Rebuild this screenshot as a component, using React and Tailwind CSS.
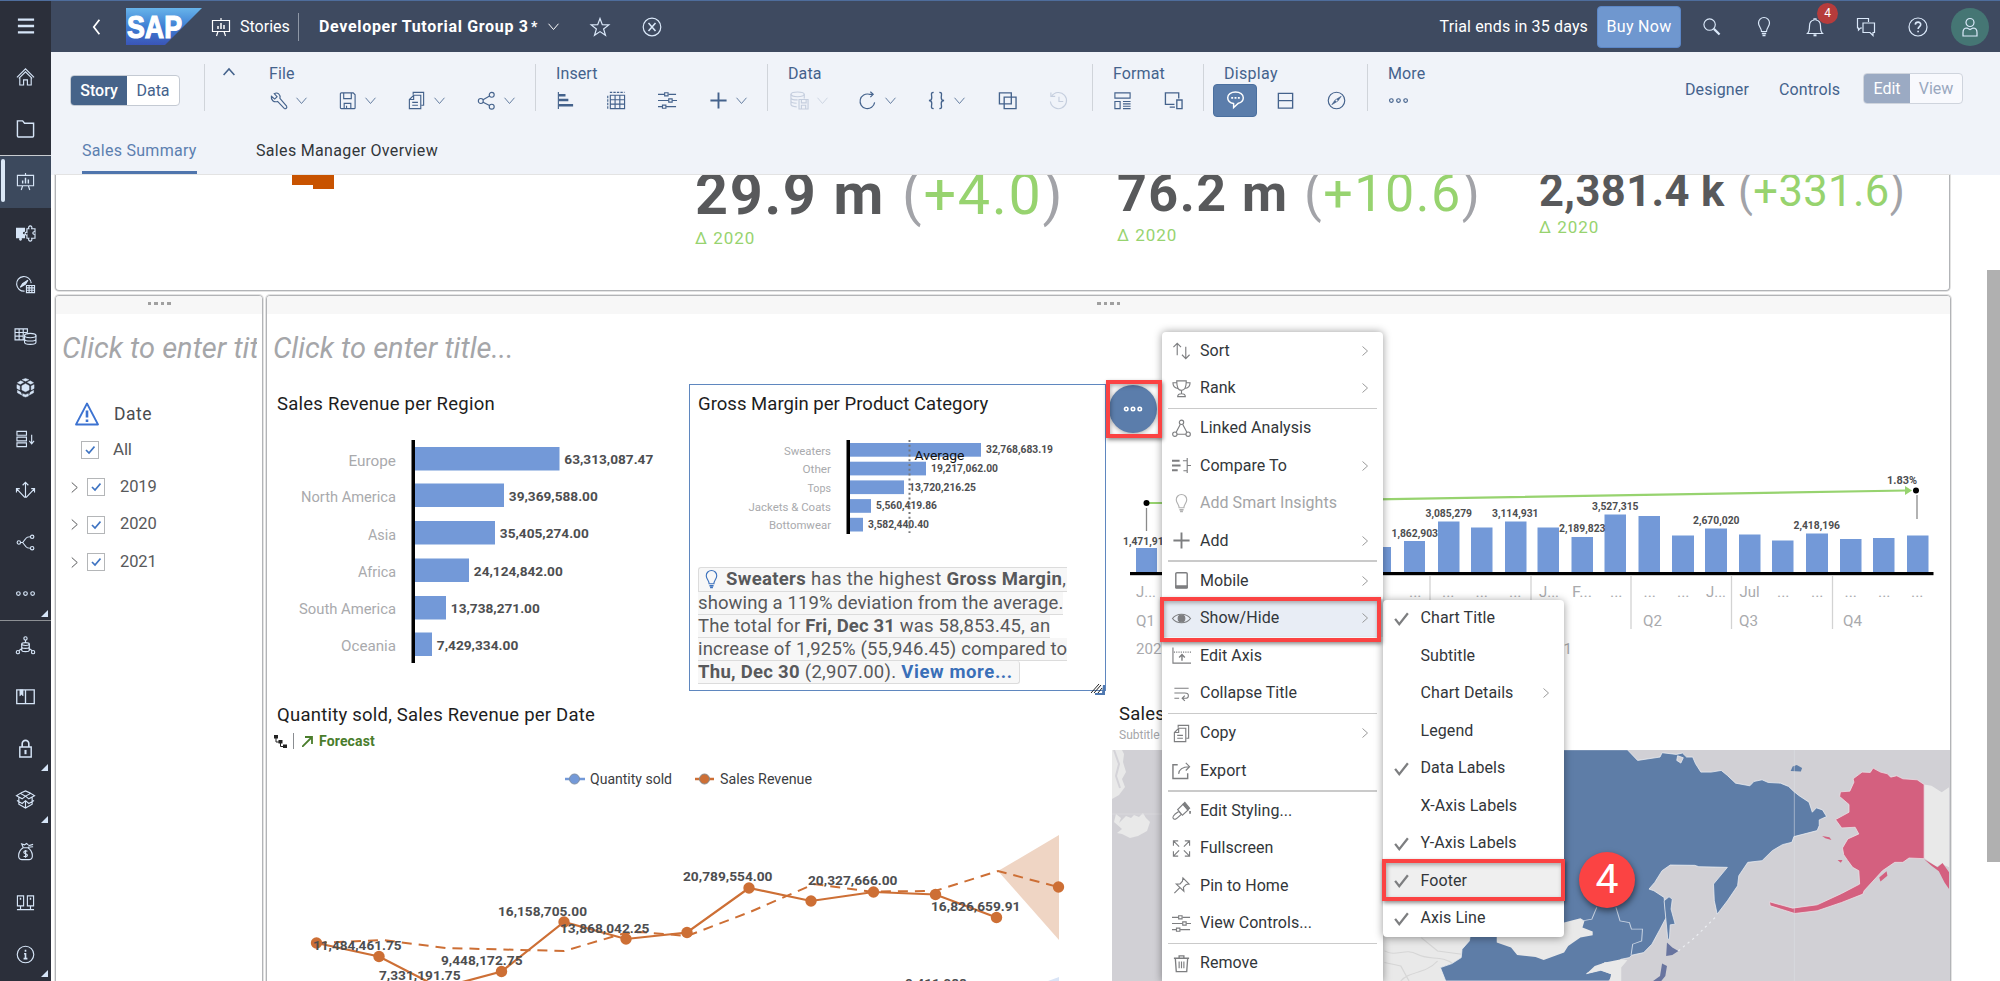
import React from "react";

/* ---------- icons (20 x 20 grid, stroked with the current colour) ---------- */

const ICONS = {
  menu: <path d="M1 3h18M1 10h18M1 17h18" strokeWidth="2.6" />,
  home: <><path d="M1 11 10 2l9 9" /><path d="M3 12 10 5l7 7" /><path d="M4 11.500V19h4v-5.500h4V19h4v-7.500" /></>,
  folder: <path d="M1.500 18V2h5.500l2 2.500h9.500V18a1 1 0 0 1-1 1H2.500a1 1 0 0 1-1-1Z" strokeWidth="1.500" />,
  easel: <><path d="M1.500 3.500h17v11h-17ZM10 1v2.500M7 14.500 5.500 19M13 14.500l1.500 4.500" /><path d="M7 12V9M10 12V6M13 12V8" strokeWidth="1.500" /></>,
  puzzle: <><path d="M0 4h9.500v4.500c-3-1.500-3 3.500 0 2V15H6c1.500 3.500-4 3.500-2.500 0H0Z" fill="currentColor" stroke="none" /><path d="M11.500 5h2c-1.500-4 4.500-4 3 0H20v3.500c-3-1.500-3 3.500 0 2v4.500h-3.500c1.500 4-4.500 4-3 0h-2v-3.500c-2.500 1-2.500-4 0-2.500Z" /></>,
  compassGrid: <><path d="M16 8.500A7.700 7.700 0 1 0 9 17" /><path d="m4.500 13 2.500-4 5.500-3.500-2.500 4Z" fill="currentColor" /><path d="M11 11h8.500v7.500H11ZM13.800 11v7.500M16.700 11v7.500M11 13.500h8.500M11 16h8.500" /></>,
  tableDb: <><path d="M9 13.500H-1V2h13v4M-1 5.800h13M-1 9.600h9M3.300 2v11.500M7.600 2v11.500" /><ellipse cx="15" cy="9" rx="6" ry="2.300" /><path d="M9 9v7c0 3 12 3 12 0V9M9 12.500c0 3 12 3 12 0" /></>,
  cubes: <><path d="m6.500 1.800 3.500-1.300 3.500 1.300-3.500 1.500ZM1.500 5 5 3l3 1.500-3.500 2ZM18.500 5 15 3l-3 1.500 3.500 2ZM1 7l3 1.500v4L1 11ZM19 7l-3 1.500v4l3-1.500ZM10 6l3.800 2.200v4.300L10 14.500l-3.800-2V8.200ZM1.500 13 5 15l1 3-4.500-2.500ZM18.500 13 15 15l-1 3 4.500-2.500ZM7 16.500l3 1 3-1v2.500l-3 1-3-1Z" fill="currentColor" strokeWidth=".5" /></>,
  listDown: <><path d="M1 1.500h10v4H1ZM1 7.500h10v4H1ZM1 13.500h10v4H1Z" /><path d="M16.500 5v9M14 11.500l2.500 3 2.500-3" /></>,
  spread: <><path d="M10 2v15M7 4.500 10 1.500l3 3M0.500 8l8.500 9h2l8.500-9M0.500 12V8H4M19.500 12V8H16" /></>,
  branch: <><circle cx="3" cy="10" r="1.800" /><circle cx="17" cy="4" r="1.800" /><circle cx="17" cy="16" r="1.800" /><path d="M4.800 10H7l3.500-4.500C11.500 4 12.500 4 15.200 4M7 10l3.500 4.500C11.500 16 12.500 16 15.200 16" /></>,
  dots: <><circle cx="2.500" cy="10" r="1.900" /><circle cx="10" cy="10" r="1.900" /><circle cx="17.500" cy="10" r="1.900" /></>,
  org: <><circle cx="10" cy="2.500" r="1.700" /><circle cx="2" cy="17" r="1.700" /><circle cx="18" cy="17" r="1.700" /><ellipse cx="10" cy="8.500" rx="4" ry="1.500" /><path d="M6 8.500v6.500c0 2 8 2 8 0V8.500M6 11.500c0 2 8 2 8 0M10 4.200V7M5.500 13.500 3 15.500M14.500 13.500 17 15.500" /></>,
  book: <><path d="M10 3H.8v14.500H10M10 3h9.200v14.500H10M10 3v14.500" strokeWidth="1.400" /><path d="M4 3v6.500l1.700-1.500 1.800 1.500V3Z" fill="currentColor" strokeWidth=".5" /></>,
  lock: <><path d="M4 8.500h12V19H4Z" strokeWidth="1.500" /><path d="M6.500 8.500V5a3.500 3.500 0 0 1 7 0v3.500" strokeWidth="1.700" /><path d="M10 11.500v4.500" strokeWidth="2.200" /></>,
  box: <><path d="m10 6.500-5.500-3L.5 6l6 3.300L10 6.500l3.500 2.800 6-3.300-4-2.500ZM5 3.200 10 1l5.200 2.300M3 8v7l7 4 7-4V8M1 11l5.500 3.200 3.500-3 3.500 3L19 11M10 11v8" /></>,
  money: <><path d="M7.500 6C2 9.500 1 18.500 6 18.500h8c5 0 4-9-1.500-12.500M7 6h6M7.500 5.500 6 2l3 1 2-1.500 2 1.500M13 4l5-1.500M12.500 5.500l5.500-.5" /><path d="M12 9.800c-1-.9-3.800-.7-3.800 1 0 2 3.800 1.200 3.800 3.200 0 1.700-3 1.800-4 .8M10.100 8.500v8" /></>,
  servers: <><path d="M1.500 3h6.500v10.500H1.500ZM12 3h6.500v10.500H12ZM4.750 13.500V17M15.250 13.500V17M1 17.500h18" /><path d="M4 6h1.500M14.500 6H16" strokeWidth="2" /></>,
  info: <><circle cx="10" cy="10" r="8.700" /><path d="M10 5v2M8.500 9.200H10V14M8 14.300h4" strokeWidth="1.700" /></>,
  back: <path d="M13 1 6 10l7 9" strokeWidth="2.200" />,
  star: <path d="m10 1.500 2.300 6.200 6.500.2-5.200 4 1.900 6.400L10 14.600l-5.500 3.700 1.900-6.400-5.200-4 6.500-.2Z" />,
  circleX: <><circle cx="10" cy="10" r="8.800" /><path d="m6.500 6 7 8M13.500 6l-7 8" strokeWidth="1.500" /></>,
  search: <><circle cx="8" cy="8" r="6" /><path d="m12.500 12.500 6 6" strokeWidth="2.300" /></>,
  bulb: <><path d="M7.500 14.500C7.500 11 4.500 9.500 4.500 6a5.500 5.500 0 0 1 11 0c0 3.500-3 5-3 8.500Z" /><path d="M7.800 16.500h4.400M8.500 18.500h3" strokeWidth="1.500" /></>,
  bell: <><path d="M2.500 16.500h15c-2-2-2-4-2-7.500 0-3-1.500-5.500-4.500-6V1.800H9V3C6 3.500 4.500 6 4.500 9c0 3.500 0 5.500-2 7.500Z" /><path d="M8.500 18.300h3" strokeWidth="2" /></>,
  chat: <><path d="M6 11H4.500L2.500 13v-2H1.500V1.500h11V5" /><path d="M7 6h11.500v9.500H17v3l-3-3H7Z" /></>,
  help: <><circle cx="10" cy="10" r="9" /><path d="M7.300 7.600c.2-3.400 5.600-3.200 5.400 0-.1 2-2.600 2-2.600 4.400M10.100 13.800v1.500" strokeWidth="1.600" /></>,
  user: <><circle cx="10" cy="5.500" r="4" /><path d="M3 19v-3.500c0-3 2-4.500 4-4.500l3 1.500L13 11c2 0 4 1.500 4 4.500V19Z" /></>,
  wrench: <path d="M2.500 5.500 6 8.500l2.500-2.500L5.500 2.800c3.500-2 7 1 6 5l7 8.200c1 1.500-1 3.500-2.500 2.300L9 11c-4 1.200-7.200-1.500-6.500-5.500Z" />,
  save: <><path d="M2.500 3a1 1 0 0 1 1-1H16l2 2v13.500a1 1 0 0 1-1 1H3.500a1 1 0 0 1-1-1Z" /><path d="M6 2v6h8V2M6.500 18.500V13h7v5.500M9 15.500v3" /></>,
  copy: <><path d="M6.500 4V1.500h11V15H15" /><path d="M14.500 4.500v14h-12V9L7 4.500ZM7 4.500V9H2.500M5.500 12h6M5.500 15h6" /></>,
  share: <><circle cx="4" cy="10.500" r="2.600" /><circle cx="15.500" cy="4" r="2.600" /><circle cx="15.500" cy="16.500" r="2.600" /><path d="m6.400 9.300 6.800-4M6.400 11.800l6.800 3.500" /></>,
  hbars: <><path d="M2.500 1v18" /><path d="M3 4.500h7M3 9.500h10M3 15h15" strokeWidth="2.700" /></>,
  table: <><path d="M3.500 4.500h15v14h-15ZM3.500 9.200h15M3.500 13.800h15M8.500 4.500v14M13.500 4.500v14" /><path d="M3 1.500h15.500M.8 5v14" strokeDasharray="2.500 1.200" /></>,
  sliders: <><path d="M0 3.500h7M11 3.500h8M0 10h11M15 10h5M0 16.500h4.500M8.500 16.500H19" /><path d="M7 1.800h3.600v3.400H7ZM11.300 8.300h3.600v3.400h-3.600ZM4.700 14.800h3.600v3.400H4.700Z" /></>,
  plus: <path d="M10 1.500v17M1.500 10h17" strokeWidth="2" />,
  dbSave: <><ellipse cx="8" cy="3.500" rx="7" ry="2.500" /><path d="M1 3.500V14c0 1.500 2.500 2.500 6 2.700M15 3.500V8M1 7c0 1.500 3 2.400 7 2.400M1 10.500c0 1.500 3 2.300 6 2.400" /><path d="M9.500 9h9.500v10H9.500ZM12 9v3.500h5V9M12 19v-4h4.500v4" /></>,
  refresh: <><path d="M17.500 12A7.700 7.700 0 1 1 12 3.500h3.500" /><path d="M13 .8 16 3.500l-3 3" /></>,
  braces: <path d="M7 1.500C3.500 1.500 5 4 5 7c0 2-1 3-3 3 2 0 3 1 3 3 0 3-1.500 5.500 2 5.500M13 1.500c3.500 0 2 2.500 2 5.500 0 2 1 3 3 3-2 0-3 1-3 3 0 3 1.500 5.500-2 5.500" strokeWidth="1.400" />,
  squares: <path d="M1.500 2h12.500v11.500H1.500ZM6.500 6.500H19V18.500H6.500Z" strokeWidth="1.400" />,
  history: <><path d="M2.800 5.500A8.500 8.500 0 1 1 1.500 11" /><path d="M2 1.500v4.200h4.500M10.500 6v5h4.500" /></>,
  layout: <path d="M2 2h16v5.500H2ZM2 11h5.500v7.500H2ZM10.500 11h8M10.500 13.500h8M10.500 16h8M10.500 18.500h8" />,
  devices: <><path d="M11 14H1.500V2h14v6" strokeWidth="1.400" /><path d="M13.500 9.500h5.500v9h-5.500ZM6 17h5.500" strokeWidth="1.400" /></>,
  comment: <><path d="M10 1c4.800 0 8.200 2.500 8.200 6 0 3.200-2.500 5.200-5.200 5.900L8 17.500v-4.300C4.500 12.500 1.800 10.500 1.800 7c0-3.500 3.400-6 8.200-6Z" strokeWidth="1.500" /><path d="M5.500 7.200h2M9 7.200h2M12.500 7.200h2" strokeWidth="2" /></>,
  split: <path d="M2.500 2.500h15v15.500h-15ZM2.500 10.200h15" strokeWidth="1.400" />,
  compass: <><circle cx="10" cy="10" r="8.700" /><path d="m5 14.500 3.500-5 6.500-4-3.500 5Z" fill="currentColor" strokeWidth=".6" /><circle cx="10" cy="10" r="1.100" fill="#f0f3f9" stroke="none" /></>,
  sort: <path d="M5.500 15V2.500M1.500 6.500l4-4 4 4M14.500 6v12.500M10.500 14.500l4 4 4-4" />,
  trophy: <path d="M5 2h10c0 6-1.500 10-5 10S5 8 5 2ZM5 4H1c0 4 2 5.500 5 6M15 4h4c0 4-2 5.500-5 6M10 12v3.500M6 18.500c0-2 2-3 4-3s4 1 4 3Z" />,
  linked: <><circle cx="10" cy="3.500" r="2.300" /><circle cx="3" cy="16" r="2.300" /><circle cx="17" cy="16" r="2.300" /><path d="M8.800 5.500 4.500 13.800M11.200 5.500l4.300 8.300M5.300 16h9.400" /></>,
  compare: <><path d="M0 5h8M0 10h9M0 15h6" strokeWidth="2" /><path d="M16 2v16M11.500 5H16M12 15.500h4M16 10h4" /></>,
  mobile: <><path d="M4 3a1.200 1.200 0 0 1 1.200-1.200h9.600A1.200 1.200 0 0 1 16 3v14.500H4Z" strokeWidth="1.500" /><path d="M3.500 15h13v2.500a1.200 1.200 0 0 1-1.200 1.200H4.700a1.200 1.200 0 0 1-1.200-1.200Z" fill="currentColor" stroke="none" /></>,
  eye: <><path d="M.5 10C5 4 15 4 19.500 10 15 16 5 16 .5 10Z" /><circle cx="10" cy="10" r="3.500" fill="currentColor" /></>,
  axis: <><path d="M1 1.500V18h19" /><path d="M2 6.500h18" strokeDasharray="1.200 1.200" /><path d="M10.500 15.500V9.500M7.500 12l3-3 3 3" strokeWidth="1.500" /></>,
  wrap: <path d="M2.500 4.500h15M2.500 9.500h11c5 0 5 5.500 0 5.500H11M13.500 12.200 10.700 15l2.800 2.800M2.500 15h5" />,
  export: <><path d="M6 4H1v14.500h15.500V13" strokeWidth="1.500" /><path d="M7 13.500c.5-5 4-7.500 11-7.500M14.500 2l4 4-4 4" /></>,
  brush: <><path d="M1.500 18.500c-1.500-1.500 0-3 1.500-4.500L7 11l3 3-4 3.500c-1.500 1.500-3 2.500-4.500 1ZM6 9l5 6 6-5.500L12 3Z" /><path d="m11.500 3.500 2-2 5 6-2 2Z" fill="currentColor" /><path d="M19 10.500v3" strokeWidth="1.800" /></>,
  full: <path d="M1.500 7V2h5M1.500 2l6 6M13.500 2h5v5M18.500 2l-6 6M1.500 13v5h5M1.500 18l6-6M18.500 13v5h-5M18.500 18l-6-6" />,
  pin: <path d="m11.500 2 6.500 6.500-3 .5-3 3 .5 4L4.500 8.500l4-.2L11 5.500ZM8 12.500 2.500 18" />,
  trash: <><path d="M2 4.500h16M7.500 4V2h5v2M3.500 4.500l1 14h11l1-14" strokeWidth="1.400" /><path d="M7.500 8v7M10 8v7M12.500 8v7" /></>,
  check: <path d="m1.500 10.500 5.500 7L18.500 3" strokeWidth="3" />,
  chevDown: <path d="m1 5 9 10.500L19 5" strokeWidth="1.800" />,
  chevUp: <path d="m1 15 9-10 9 10" strokeWidth="2.600" />,
  chevRight: <path d="m5 1 10 9-10 9" strokeWidth="1.800" />,
};

function Icon({ name, className = "" }) {
  return (
    <svg viewBox="0 0 20 20" fill="none" stroke="currentColor" strokeWidth="1.200" className={"block shrink-0 overflow-visible " + className}>
      {ICONS[name]}
    </svg>
  );
}

/* ---------- left navigation ---------- */

const NAV_TOP = ["home", "folder"];
const NAV_MAIN = ["easel", "puzzle", "compassGrid", "tableDb", "cubes", "listDown", "spread", "branch", "dots"];
const NAV_ADMIN = ["org", "book", "lock", "box", "money", "servers", "info"];
const NAV_FLYOUT = ["dots", "lock", "box", "info"];

function NavItem({ name, active }) {
  return (
    <div className={"relative flex h-[51.500px] w-full shrink-0 items-center justify-center " + (active ? "bg-[#3c495d]" : "")}>
      {active && <span className="absolute top-[3px] left-[1px] h-[43px] w-[4px] rounded-sm bg-[#dbe8f7]" />}
      <Icon name={name} className="size-[19px]" />
      {NAV_FLYOUT.includes(name) && (
        <svg viewBox="0 0 7 7" className="absolute right-[3px] bottom-[3px] size-[7px]"><path d="M7 0v7H0Z" fill="currentColor" /></svg>
      )}
    </div>
  );
}

function Sidebar() {
  return (
    <nav className="flex h-full w-[51px] shrink-0 flex-col border-t border-[#4e6d9c] bg-[#2b2f3a] text-[#d6e5f7]">
      <div className="flex h-[50px] shrink-0 items-center justify-center"><Icon name="menu" className="size-[18px]" /></div>
      {NAV_TOP.map((n) => <NavItem key={n} name={n} />)}
      <div className="mt-[1px] border-y border-[#c9ccd0] border-b-[#8d9094]">
        {NAV_MAIN.map((n, i) => <NavItem key={n} name={n} active={i === 0} />)}
      </div>
      <div className="-mt-[1px]">{NAV_ADMIN.map((n) => <NavItem key={n} name={n} />)}</div>
    </nav>
  );
}

/* ---------- shell header ---------- */

function SapLogo() {
  return (
    <svg viewBox="0 0 76 37" className="ml-[21px] h-[37px] w-[76px] shrink-0">
      <defs>
        <linearGradient id="sap" x1="0" y1="0" x2="0" y2="1">
          <stop offset="0" stopColor="#67b4ea" />
          <stop offset=".5" stopColor="#3f7fd4" />
          <stop offset="1" stopColor="#3a55b8" />
        </linearGradient>
      </defs>
      <path d="M0 0h76L39 37H0Z" fill="url(#sap)" />
      <text x="1" y="30" textLength="55" lengthAdjust="spacingAndGlyphs" fontFamily="Liberation Sans, sans-serif" fontWeight="700" fontSize="31" fill="#fff" stroke="#fff" strokeWidth="1.200">SAP</text>
    </svg>
  );
}

function Header() {
  return (
    <header className="flex h-[52px] shrink-0 items-center border-t border-[#4e6d9c] bg-[#3e4a60] text-[16px] text-white">
      <Icon name="back" className="ml-[38px] size-[16px]" />
      <SapLogo />
      <Icon name="easel" className="ml-[9px] size-[20px]" />
      <span className="ml-[9px] w-[50px]">Stories</span>
      <span className="ml-[8px] h-[28px] w-px bg-[#8e97a6]" />
      <span className="ml-[20px] w-[212px] font-bold tracking-[0.68px] whitespace-nowrap">Developer Tutorial Group 3</span>
      <span className="w-[10px] text-[14px] leading-none font-bold">*</span>
      <Icon name="chevDown" className="ml-[7px] size-[11px]" />
      <Icon name="star" className="ml-[31px] size-[20px] text-[#dbe9fa]" />
      <Icon name="circleX" className="ml-[32px] size-[20px] text-[#dbe9fa]" />
      <span className="ml-auto tracking-[0.14px]">Trial ends in 35 days</span>
      <button className="ml-[9px] h-[42px] w-[84px] rounded-[4px] border border-[#5b86c6] bg-[#6f97cf] tracking-[0.3px]">Buy Now</button>
      <div className="flex items-center text-[#dbe9fa]">
        <Icon name="search" className="ml-[21px] size-[19px]" />
        <Icon name="bulb" className="ml-[33px] size-[20px]" />
        <div className="relative ml-[31px]">
          <Icon name="bell" className="size-[20px]" />
          <span className="absolute -top-[14px] left-[12px] flex size-[21px] items-center justify-center rounded-full bg-[#b63c3c] text-[12px] text-white">4</span>
        </div>
        <Icon name="chat" className="ml-[31px] size-[20px]" />
        <Icon name="help" className="ml-[32px] size-[20px]" />
        <span className="mr-[11px] ml-[23px] flex size-[38px] items-center justify-center rounded-full bg-[#457674]">
          <Icon name="user" className="size-[20px]" />
        </span>
      </div>
    </header>
  );
}

/* ---------- toolbar ---------- */

function Tool({ name, menu, faded, className = "" }) {
  return (
    <span className={"flex items-center gap-[7px] " + (faded ? "text-[#c5cede] " : "") + className}>
      <span className="flex size-[22px] items-center justify-center"><Icon name={name} className="size-[19px]" /></span>
      {menu && <Icon name="chevDown" className="size-[11px] opacity-80" />}
    </span>
  );
}

function Group({ label, className, labelClass, rowClass, children }) {
  return (
    <div className={"flex h-[47px] shrink-0 flex-col justify-between border-l border-[#d0d4da] " + className}>
      <span className={"h-[18px] leading-[19px] tracking-[0.1px] " + labelClass}>{label}</span>
      <div className={"flex h-[22px] items-center " + rowClass}>{children}</div>
    </div>
  );
}

function Toolbar() {
  return (
    <div className="flex h-[78px] shrink-0 items-start pt-[12px] text-[16px] text-[#44628c]">
      <div className="mt-[11px] ml-[19px] flex h-[31px] w-[110px] shrink-0 overflow-hidden rounded-[4px] border border-[#c4cad3] bg-white leading-[30px]">
        <span className="w-[56px] bg-[#466389] text-center font-medium text-white">Story</span>
        <span className="flex-1 text-center">Data</span>
      </div>
      <div className="ml-[24px] h-[47px] border-l border-[#d0d4da] pt-[2px]"><Icon name="chevUp" className="ml-[18px] size-[12px]" /></div>
      <Group label="File" className="w-[300px] border-l-0" labelClass="ml-[34px]" rowClass="ml-[32px] gap-[29px]">
        <Tool name="wrench" menu />
        <Tool name="save" menu />
        <Tool name="copy" menu />
        <Tool name="share" menu className="ml-px" />
      </Group>
      <Group label="Insert" className="w-[232px]" labelClass="ml-[20px]" rowClass="ml-[18px] gap-[29px]">
        <Tool name="hbars" />
        <Tool name="table" />
        <Tool name="sliders" />
        <Tool name="plus" menu />
      </Group>
      <Group label="Data" className="w-[325px]" labelClass="ml-[20px]" rowClass="ml-[20px] gap-[29px]">
        <Tool name="dbSave" menu faded />
        <Tool name="refresh" menu className="-ml-px" />
        <Tool name="braces" menu />
        <Tool name="squares" className="ml-[2px]" />
        <Tool name="history" faded />
      </Group>
      <Group label="Format" className="w-[111px]" labelClass="ml-[20px]" rowClass="ml-[18px] gap-[29px]">
        <Tool name="layout" />
        <Tool name="devices" />
      </Group>
      <Group label="Display" className="w-[164px]" labelClass="ml-[20px] tracking-[0.3px]" rowClass="ml-[9px]">
        <span className="flex h-[33px] w-[44px] shrink-0 items-center justify-center rounded-[4px] border border-[#4a6f9f] bg-[#5b7dab] text-white">
          <Icon name="comment" className="size-[19px]" />
        </span>
        <Tool name="split" className="ml-[17px]" />
        <Tool name="compass" className="ml-[29px]" />
      </Group>
      <Group label="More" className="w-[60px]" labelClass="ml-[20px]" rowClass="ml-[19px]">
        <Tool name="dots" />
      </Group>
      <span className="mt-[14px] ml-auto tracking-[0.14px]">Designer</span>
      <span className="mt-[14px] ml-[30px] tracking-[0.11px]">Controls</span>
      <div className="mt-[9px] mr-[37px] ml-[23px] flex h-[31px] w-[100px] shrink-0 overflow-hidden rounded-[4px] border border-[#cfd4dd] bg-[#f8f9fd] leading-[30px]">
        <span className="w-[46px] bg-[#9baac3] text-center text-white">Edit</span>
        <span className="flex-1 text-center text-[#9aa8bf]">View</span>
      </div>
    </div>
  );
}

function PageTabs() {
  return (
    <div className="flex h-[45px] shrink-0 items-start pl-[31px] text-[16px] leading-[42px]">
      <span className="h-[44px] w-[115px] border-b-[3px] border-[#4f75ad] tracking-[0.28px] whitespace-nowrap text-[#5c7fb0]">Sales Summary</span>
      <span className="ml-[59px] tracking-[0.33px] text-[#32363a]">Sales Manager Overview</span>
    </div>
  );
}

/* ---------- story panels ---------- */

const LANE = "border border-[#b2b4b7] ring-1 ring-[#e3e3e3] bg-white";

function LaneHandle() {
  return (
    <div className="flex h-[18px] shrink-0 items-center justify-center gap-[3px] bg-[#f7f7f7] pb-[3px]">
      {[0, 1, 2, 3].map((i) => <span key={i} className="h-[3px] w-[3.500px] bg-[#a0a0a0]" />)}
    </div>
  );
}

function Kpi({ value, delta, className, valueClass, textClass, noteClass }) {
  return (
    <div className={"shrink-0 whitespace-nowrap " + className}>
      <div className={"flex leading-none text-[#58595b] " + textClass}>
        <span className={"shrink-0 font-bold " + valueClass}>{value}</span>
        <span className="text-[#a2a3a8]">(<span className="text-[#97d36f]">{delta}</span>)</span>
      </div>
      <div className={"text-[17px] leading-[20px] tracking-[1px] text-[#97d36f] " + noteClass}>Δ 2020</div>
    </div>
  );
}

function KpiLane() {
  return (
    <section className={"flex h-[116px] w-[1895px] shrink-0 items-start overflow-hidden rounded-b-[4px] border-t-0 " + LANE}>
      <svg viewBox="0 0 42 14" className="ml-[236px] h-[14px] w-[42px] shrink-0"><path d="M0 0h42v14H21v-4H0Z" fill="#c85300" /></svg>
      <Kpi value="29.9 m" delta="+4.0" className="ml-[361px] w-[422px]" textClass="-mt-[9px] text-[57.500px] tracking-[1.700px]" valueClass="w-[207px]" noteClass="mt-[4px]" />
      <Kpi value="76.2 m" delta="+10.6" className="w-[422px]" textClass="-mt-[7px] text-[52px] tracking-[1.500px]" valueClass="w-[187px]" noteClass="mt-[5px]" />
      <Kpi value="2,381.4 k" delta="+331.6" className="w-[400px]" textClass="-mt-[5px] text-[43.500px] tracking-[0.400px]" valueClass="w-[199px]" noteClass="mt-[3px]" />
    </section>
  );
}

function Checkbox() {
  return (
    <span className="flex size-[18px] items-center justify-center border-[1.500px] border-[#b4b6b8] bg-white">
      <svg viewBox="0 0 10 10" className="size-[10px]"><path d="m1 5 3 3 5.500-6.500" fill="none" stroke="#3f74c2" strokeWidth="1.700" /></svg>
    </span>
  );
}

function FilterLane() {
  return (
    <section className={"flex w-[208px] shrink-0 flex-col overflow-hidden rounded-t-[4px] " + LANE}>
      <LaneHandle />
      <div className="ml-[6px] w-[195px] overflow-hidden pt-[16px] text-[29px] leading-[36px] whitespace-nowrap text-[#a5a6a9] italic">Click to enter title...</div>
      <div className="mt-[32px] ml-[19px] flex h-[32px] items-center gap-[15px] text-[17.500px] tracking-[0.500px] text-[#4a4c4f]">
        <svg viewBox="0 0 24 24" className="size-[24px]" fill="none" stroke="#3d73d1" strokeWidth="1.800" strokeLinejoin="round"><path d="M12 1.500 23 22.500H1Z" /><path d="M12 8.500v7M12 17.500v2.500" strokeWidth="2.600" /></svg>
        Date
      </div>
      <div className="mt-[1px] ml-[25px] flex h-[37.500px] items-center gap-[14px] text-[17px] tracking-[-0.200px] text-[#58595b]"><Checkbox />All</div>
      {["2019", "2020", "2021"].map((y) => (
        <div key={y} className="ml-[13px] flex h-[37.500px] items-center text-[16.500px] tracking-[-0.100px] text-[#58595b]">
          <Icon name="chevRight" className="mr-[7px] size-[11px] [stroke-width:2]" />
          <Checkbox />
          <span className="ml-[15px]">{y}</span>
        </div>
      ))}
    </section>
  );
}

/* ---------- charts ---------- */

/* Chart label; `w` is the advance width of the run. */
function T({ x, y, w, s = 13.500, end, bold, fill = "#4d4e50", children }) {
  return (
    <text x={x} y={y} fontSize={s} textAnchor={end ? "end" : "start"} fontWeight={bold ? 700 : 400} fill={fill} textLength={w} lengthAdjust="spacingAndGlyphs">
      {children}
    </text>
  );
}

const BLUE = "#7399d8";
const GREY = "#a9aaad";

const REGIONS = [
  ["Europe", 47.5, 466, 447, 559.5, "63,313,087.47", 89],
  ["North America", 95, 502, 483.5, 504, "39,369,588.00", 89],
  ["Asia", 28, 539.5, 521, 495, "35,405,274.00", 89],
  ["Africa", 38, 577, 558.5, 469, "24,124,842.00", 89],
  ["South America", 97, 613.5, 596, 446, "13,738,271.00", 89],
  ["Oceania", 55, 651, 632.5, 432, "7,429,334.00", 81.5],
];

function RegionChart() {
  return (
    <svg viewBox="267 423 422 261" className="h-[261px] w-[422px]">
      {REGIONS.map(([name, nw, by, top, end, val, vw]) => (
        <g key={name}>
          <T x={396} y={by} w={nw} s={14.800} end fill={GREY}>{name}</T>
          <rect x={415} y={top} width={end - 415} height={23.500} fill={BLUE} />
          <T x={end + 4.800} y={top + 17} w={vw} s={13.700} bold>{val}</T>
        </g>
      ))}
      <rect x="411.500" y="440" width="3.500" height="223" fill="#000" />
    </svg>
  );
}

const MARGINS = [
  ["Sweaters", 47, 981, "32,768,683.19", 67],
  ["Other", 28.5, 926, "19,217,062.00", 67],
  ["Tops", 23.5, 904, "13,720,216.25", 67],
  ["Jackets & Coats", 82.5, 871, "5,560,419.86", 61],
  ["Bottomwear", 62, 863, "3,582,440.40", 61],
];

function MarginChart() {
  return (
    <svg viewBox="690 424 416 130" className="h-[130px] w-[416px] shrink-0">
      {MARGINS.map(([name, nw, end, val, vw], i) => {
        const y = 443 + i * 18.700;
        return (
          <g key={name}>
            <T x={831} y={y + 11.500} w={nw} s={11.800} end fill={GREY}>{name}</T>
            <rect x={850} y={y} width={end - 850} height={13.700} fill={BLUE} />
            <T x={end + 5} y={y + 10.300} w={vw} s={10.300} bold>{val}</T>
          </g>
        );
      })}
      <rect x="846.500" y="440" width="3.500" height="94" fill="#000" />
      <path d="M909.500 440v93" stroke="#77787a" strokeWidth="2" strokeDasharray="2 2.800" />
      <T x={914.500} y={460} w={50} s={13.500} fill="#111">Average</T>
    </svg>
  );
}

const INSIGHT = "block w-fit whitespace-nowrap border-b border-[#dcdcdc] bg-[#f7f7f7] h-[23.200px] ";

function MarginWidget() {
  return (
    <div className="flex h-[307px] w-[417px] shrink-0 flex-col border border-[#5f87bf]">
      <h3 className="flex h-[39px] shrink-0 items-center pt-[1px] pl-[8px] text-[18.500px] tracking-[0.030px] text-[#1d1d1d]">Gross Margin per Product Category</h3>
      <MarginChart />
      <div className="mt-[13px] pl-[8px] text-[18.500px] leading-[23px] tracking-[0.090px] text-[#58595b]">
        <span className={INSIGHT + "h-[24.500px]! w-[369px]! rounded-tl-[3px] border-t border-l tracking-[0.330px]"}>
          <span className="flex h-[22px] items-center">
            <Icon name="bulb" className="mr-[5px] ml-[3px] size-[19px] text-[#3d72bd]" />
            <span><b>Sweaters</b> has the highest <b>Gross Margin</b>,</span>
          </span>
        </span>
        <span className={INSIGHT}>showing a 119% deviation from the average.</span>
        <span className={INSIGHT + "tracking-[0.150px]"}>The total for <b>Fri, Dec 31</b> was 58,853.45, an</span>
        <span className={INSIGHT + "tracking-[0.170px]"}>increase of 1,925% (55,946.45) compared to</span>
        <span className={INSIGHT + "rounded-r-[3px] border-r pr-[6px] tracking-[0.280px]"}>
          <b>Thu, Dec 30</b> (2,907.00). <b className="tracking-[0.600px] text-[#3a6fb8]">View more...</b>
        </span>
      </div>
      <svg viewBox="0 0 14 11" className="mt-auto ml-auto h-[11px] w-[14px] shrink-0">
        <path d="M14 1v10H4v-2h7l1-8Z" fill="#4f78b0" />
        <path d="M0 9 8 0M3 9l7-8M7 9l4-5" stroke="#222" strokeWidth="1" />
      </svg>
    </div>
  );
}

const MONTH_BARS = [
  [1136, 1157, 548], [1370, 1391, 547], [1404, 1425, 541], [1438, 1459.5, 521.5], [1471, 1492.5, 527.5], [1505, 1526.5, 521.5],
  [1537.5, 1559, 527.5], [1571.5, 1593, 537], [1604.5, 1626, 514.5], [1638.5, 1660, 516], [1672, 1694, 535.5], [1705, 1727, 528.5],
  [1739, 1760.5, 534.5], [1772, 1793.5, 540.5], [1806, 1828, 533.5], [1840, 1861.5, 539], [1873, 1894.5, 538], [1907, 1928.5, 535.5],
];
const MONTH_VALUES = [
  [1123, 545, "1,471,911"], [1391.5, 536.5, "1,862,903"], [1425.5, 517, "3,085,279"], [1492, 517, "3,114,931"], [1559, 532, "2,189,823"],
  [1592, 510, "3,527,315"], [1693, 524, "2,670,020"], [1793.5, 528.5, "2,418,196"],
];
const MONTH_LABELS = [
  [1136, "J..."], [1409, "..."], [1442, "..."], [1475.5, "..."], [1509, "..."], [1539, "J..."], [1572, "F..."], [1610, "..."],
  [1643.5, "..."], [1677, "..."], [1706, "J..."], [1739.5, "Jul"], [1777, "..."], [1811, "..."], [1844.5, "..."], [1878, "..."], [1911, "..."],
];

function VarianceChart() {
  return (
    <svg viewBox="1106 384 844 314" className="h-[314px] w-[844px] shrink-0">
      {[1430, 1531, 1631, 1731.5, 1832.5].map((x) => <path key={x} d={`M${x} 576v53`} stroke="#d3d3d3" strokeWidth="1.300" />)}
      {MONTH_BARS.map(([a, b, top]) => <rect key={a} x={a} y={top} width={b - a} height={572 - top} fill={BLUE} />)}
      <rect x="1130" y="572" width="803.500" height="3.200" fill="#000" />
      {MONTH_VALUES.map(([x, y, v]) => <T key={v} x={x} y={y} w={46.500} s={10.300} bold>{v}</T>)}
      <T x={1887} y={484} w={30} s={10.300} bold>1.83%</T>
      {MONTH_LABELS.map(([x, l]) => <T key={x} x={x} y={597} w={l === "..." ? 12.500 : 20} s={14.500} fill={GREY}>{l}</T>)}
      <T x={1136} y={626} w={19} s={14.500} fill={GREY}>Q1</T>
      <T x={1643} y={626} w={19} s={14.500} fill={GREY}>Q2</T>
      <T x={1739} y={626} w={19} s={14.500} fill={GREY}>Q3</T>
      <T x={1843} y={626} w={19} s={14.500} fill={GREY}>Q4</T>
      <T x={1136} y={654} w={34} s={14.500} fill={GREY}>2020</T>
      <T x={1538} y={654} w={34} s={14.500} fill={GREY}>2021</T>
      <path d="M1149 503H1160L1907 490.500" stroke="#97d36f" strokeWidth="2.200" fill="none" />
      <path d="m1905 486 7 4.500-7 4.500Z" fill="#97d36f" />
      <circle cx="1146.500" cy="503" r="3" />
      <circle cx="1916" cy="490.500" r="3" />
      <path d="M1146.500 508v23M1917 495v24" stroke="#8a8a8a" strokeWidth="1.300" />
    </svg>
  );
}

const ACTUAL = [[316.5, 943], [379, 956.5], [440, 988], [501.5, 971.5], [564, 922], [626, 939], [687, 932.5], [749, 888], [811, 901], [873.5, 892], [935.5, 894.5], [996.5, 917.5]];
const LINE_VALUES = [
  [313, 950, 88.5, "11,484,461.75"], [379, 980, 81.5, "7,331,191.75"], [441, 964.5, 81.5, "9,448,172.75"], [498, 915.5, 89, "16,158,705.00"],
  [560, 932.5, 89.5, "13,868,042.25"], [683, 881, 89.5, "20,789,554.00"], [808, 885, 89.5, "20,327,666.00"], [931, 911, 89.5, "16,826,659.91"], [905, 988, 62, "9,411,088"],
];

function TrendChart() {
  const orange = "#cd6f35";
  return (
    <svg viewBox="267 751 845 230" className="h-[230px] w-[845px]">
      <path d="M565 779h20" stroke={BLUE} strokeWidth="2.500" />
      <circle cx="574.500" cy="779" r="5" fill={BLUE} stroke="#8090a6" />
      <T x={590} y={784} w={82} s={14.200} fill="#3c3d3f">Quantity sold</T>
      <path d="M695 779h19" stroke={orange} strokeWidth="2.500" />
      <circle cx="704.500" cy="779" r="5" fill={orange} stroke="#8a8a8a" />
      <T x={720} y={784} w={92} s={14.200} fill="#3c3d3f">Sales Revenue</T>
      <path d="M998 871 1059 835V940Z" fill="#efd5c4" />
      <path d="m1048 981 11-4v4Z" fill="#d9e4f6" />
      <path d="M317 943 382 940 446 948 503 949.500 564 951 622 934 640 932 687 936 750 912 814 884 870 891.500 935 891 998 871 1058 887" fill="none" stroke={orange} strokeWidth="2" strokeDasharray="10 7" />
      <polyline points={ACTUAL.map((p) => p.join(",")).join(" ")} fill="none" stroke={orange} strokeWidth="2.200" />
      {[...ACTUAL, [1058.5, 887]].map(([x, y]) => <circle key={x} cx={x} cy={y} r="5.700" fill={orange} />)}
      {LINE_VALUES.map(([x, y, w, v]) => <T key={v} x={x} y={y} w={w} s={13.700} bold>{v}</T>)}
    </svg>
  );
}

function TrendWidget() {
  return (
    <div className="flex w-[845px] shrink-0 flex-col">
      <h3 className="flex h-[33px] items-center pt-[3px] pl-[10px] text-[18.500px] tracking-[0.230px] text-[#1d1d1d]">Quantity sold, Sales Revenue per Date</h3>
      <div className="flex h-[20px] items-center pl-[7px] text-[14px] font-bold tracking-[0.150px] text-[#4a7d2c]">
        <svg viewBox="0 0 13 13" className="size-[13px]"><path d="M0 0h4v3.500H0ZM4.500 5h4v3.500h-4ZM9 9.500h4V13H9Z" fill="#222" /><path d="M2 3v4h3M6.500 8v3.500H9" fill="none" stroke="#222" /></svg>
        <span className="mr-[8px] ml-[6px] h-[16px] w-px bg-[#8a8d91]" />
        <svg viewBox="0 0 11 11" className="mr-[6px] size-[11px]"><path d="M0 11 10 1M3 1h7v7" fill="none" stroke="#4a7d2c" strokeWidth="1.800" /></svg>
        Forecast
      </div>
      <TrendChart />
    </div>
  );
}

/* World map around the Bering Sea. The inner group has its own drawing grid. */
function GeoMap() {
  const land = "#e9e9e9";
  const blue = "#5e7da7";
  const pink = "#d4607f";
  return (
    <svg viewBox="1112 750 838 231" className="h-[231px] w-[838px]">
      <rect x="1112" y="750" width="838" height="231" fill="#d1d0d5" />
      <path d="M1112 750h10l2 4-1 8 3 10-4 7 3 8-6 8-7 4Z" fill={land} />
      <path d="M1114 750l5 14-3 12 4 12" fill="none" stroke="#d4d3d8" strokeWidth="2" />
      <path d="M1114 822 1116 814 1121 818 1119 823 1126 816 1131 818 1134 815 1139 817 1143 813 1146 818 1150 822 1147 831 1138 836 1130 838 1122 834 1117 833 1122 829Z" fill={land} />
      <path d="M1112 814h50" stroke="#dddce1" strokeWidth=".7" />
      <g transform="translate(1360 600) scale(.4082 .3342)">
        <path d="M0 990H620V1040L560 1100 640 1075 600 1140H0Z" fill={land} />
        <path d="M60 1050c30 20 50-10 80 10s60 0 90 30M100 1140c20-30 60-20 90-60M60 1085 100 1095 120 1140M150 1010l40 40 60 10" fill="none" stroke="#d6d6d6" strokeWidth="3" />
        <path d="M1382 552 1400 556 1425 575 1443 560V800L1425 790 1412 798 1382 772Z" fill={land} />
        <path d="M270 448H655L680 480 735 470 740 457 775 462 790 458 800 470 815 470 822 490 835 515 860 515 885 510 900 525 920 548 955 556 965 543 985 538 1000 546 1030 548 1050 558 1062 572 1075 585 1100 605 1108 635 1118 622 1133 628 1143 648 1125 658 1125 675 1120 690 1063 708 1058 725 1035 732 1010 750 985 780 950 785 928 825 925 855 900 900 875 940 868 900 866 850 900 800 830 798 820 794 760 793 740 810 722 845 708 865 720 870 745 890 750 950 735 985 715 1030 695 1055 665 1063 660 1070 640 1075 625 1090 600 1085 580 1100 555 1118 590 1108 620 1120 610 1140H210L197 1100 225 1088 248 1070 250 1045 268 1020 270 1005Z" fill={blue} stroke="#eef0f4" strokeWidth="2" />
        <path d="M778 466 792 472 786 488 776 480Z" fill="#d1d0d5" stroke="#eef0f4" strokeWidth="2" />
        <path d="M500 965 540 952 550 960 545 980 570 992 570 1003 540 1010 510 1035 500 1055 450 1077 430 1068 385 1062 370 1040 335 1025V1000Z" fill={land} />
        <path d="M545 960 568 955 580 920M627 920 637 960 660 965 665 985 692 985 690 1020 668 1030 664 1063" fill="none" stroke="#c8d3e2" strokeWidth="2.500" />
        <path d="M555 1118 575 1095 600 1085 640 1075 655 1078 640 1100 640 1140H612L615 1120 590 1108Z" fill={land} />
        <path d="M745 900 757 888 765 895 762 925 772 970 760 972 758 1015 754 1015Z" fill={blue} stroke="#e8ebf0" strokeWidth="2" />
        <path d="M752 1025 765 1040 780 1050 765 1062 750 1065ZM740 1088 752 1095 748 1125 738 1140H718L735 1125Z" fill="#68749f" />
        <path d="M780 1050 820 1010 870 950" fill="none" stroke="#eef0f4" strokeWidth="3" strokeDasharray="6 10" />
        <path d="M1055 512 1060 498 1070 494 1083 503 1080 513Z" fill={blue} />
        <path d="M1210 545 1208 535 1230 515 1250 516 1257 503 1275 515 1292 520 1300 530 1315 526 1330 535 1365 538 1382 552V774L1345 772 1330 785 1310 785 1280 810 1235 870 1232 880 1180 905 1120 930 1065 938 1005 915 1003 903 1060 922 1120 912 1180 878 1224 850 1222 810 1207 800 1195 780 1185 762 1182 742 1195 715 1222 700 1213 680 1180 682 1165 657 1198 635 1198 612 1175 588 1177 574 1200 572Z" fill={pink} stroke="#ece3e8" strokeWidth="2" />
        <path d="M1382 776 1415 800 1427 787 1443 815V865L1432 845 1418 812 1400 795ZM1272 830 1290 812 1292 825 1275 842ZM1132 706 1150 710 1155 718 1140 713ZM1170 778 1182 778 1178 786Z" fill={pink} />
        <path d="M1064 448V1140" stroke="#dfe1e8" strokeWidth="2" opacity=".7" />
      </g>
    </svg>
  );
}

function ChartLane() {
  return (
    <section className={"flex w-[1685px] shrink-0 flex-col overflow-hidden rounded-t-[4px] " + LANE}>
      <LaneHandle />
      <div className="h-[70px] shrink-0 pt-[16px] pl-[6px] text-[29px] leading-[36px] text-[#a5a6a9] italic">Click to enter title...</div>
      <div className="flex h-[314px] shrink-0">
        <div className="flex w-[422px] shrink-0 flex-col">
          <h3 className="flex h-[39px] items-center pt-[2px] pl-[10px] text-[18.500px] tracking-[0.250px] text-[#1d1d1d]">Sales Revenue per Region</h3>
          <RegionChart />
        </div>
        <MarginWidget />
        <VarianceChart />
      </div>
      <div className="flex shrink-0">
        <TrendWidget />
        <div className="flex w-[838px] shrink-0 flex-col">
          <h3 className="h-[31px] pt-[3px] pl-[7px] text-[18.500px] tracking-[0.250px] text-[#1d1d1d]">Sales Revenue per Store</h3>
          <span className="h-[20.500px] pl-[7px] text-[12px] leading-[12px] text-[#a5a6a9]">Subtitle</span>
          <GeoMap />
        </div>
      </div>
    </section>
  );
}

/* ---------- menus ---------- */

const MENU = [
  ["sort", "Sort", true], ["trophy", "Rank", true], null,
  ["linked", "Linked Analysis"], ["compare", "Compare To", true], ["bulb", "Add Smart Insights"], ["plus", "Add", true], null,
  ["mobile", "Mobile", true], ["eye", "Show/Hide", true], ["axis", "Edit Axis"], ["wrap", "Collapse Title"], null,
  ["copy", "Copy", true], ["export", "Export"], null,
  ["brush", "Edit Styling..."], ["full", "Fullscreen"], ["pin", "Pin to Home"], ["sliders", "View Controls..."], null,
  ["trash", "Remove"],
];

const SUBMENU = [
  ["Chart Title", true], ["Subtitle"], ["Chart Details", false, true], ["Legend"], ["Data Labels", true],
  ["X-Axis Labels"], ["Y-Axis Labels", true], ["Footer", true], ["Axis Line", true],
];

const MARK = "absolute border-4 border-[#fb4343] shadow-[1px_2px_4px_rgba(0,0,0,0.45),inset_1px_2px_4px_rgba(0,0,0,0.3)] ";

function ContextMenu() {
  return (
    <div className="absolute top-[332px] left-[1162px] w-[221px] rounded-t-[4px] bg-white text-[16px] tracking-[0.040px] text-[#32363a] shadow-[0_0_8px_rgba(0,0,0,0.4)]">
      {MENU.map((m, i) =>
        m === null ? (
          <div key={i} className="mx-[6px] mt-[1px] mb-[0.300px] h-[1.200px] bg-[#cacaca]" />
        ) : (
          <div key={i} className={"flex h-[37.500px] items-center pl-[10px] " + (m[1] === "Show/Hide" ? "bg-[#e8edf5] " : "") + (m[1] === "Add Smart Insights" ? "text-[#a3a4a6]" : "")}>
            <Icon name={m[0]} className={"mr-[9px] size-[19px] " + (m[1] === "Add Smart Insights" ? "text-[#b0b0b0]" : "text-[#7d7e80]")} />
            {m[1]}
            {m[2] && <Icon name="chevRight" className="mr-[13px] ml-auto size-[10px] text-[#8f8f8f]" />}
          </div>
        ),
      )}
    </div>
  );
}

function SubMenu() {
  return (
    <div className="absolute top-[599.500px] left-[1383px] w-[181px] rounded-[4px] bg-white text-[16px] tracking-[0.080px] text-[#32363a] shadow-[0_1px_8px_rgba(0,0,0,0.4)]">
      {SUBMENU.map(([label, checked, more]) => (
        <div key={label} className={"flex h-[37.500px] items-center pl-[11px] " + (label === "Footer" ? "border border-dotted border-black bg-[#efefef] pl-[10px]!" : "")}>
          <span className="w-[26.500px]">{checked && <Icon name="check" className="size-[15px] text-[#7d7e80]" />}</span>
          {label}
          {more && <Icon name="chevRight" className="mr-[13px] ml-auto size-[10px] text-[#8f8f8f]" />}
        </div>
      ))}
    </div>
  );
}

export default function App() {
  return (
    <div className="relative flex h-[981px] w-[2000px] overflow-hidden bg-white font-['Roboto','Noto_Sans',sans-serif]">
      <Sidebar />
      <main className="flex min-w-0 flex-1 flex-col">
        <Header />
        <div className="flex h-[123px] shrink-0 flex-col bg-[#f0f3f9]">
          <Toolbar />
          <PageTabs />
        </div>
        <div className="flex min-h-0 flex-1">
          <div className="flex min-w-0 flex-1 flex-col pl-[4px]">
            <KpiLane />
            <div className="-mb-[4px] flex min-h-0 flex-1 gap-[3px] pt-[4px]">
              <FilterLane />
              <ChartLane />
            </div>
          </div>
          <div className="w-[13px] shrink-0 pt-[95px]"><div className="h-[592px] bg-[#b0b0b0]" /></div>
        </div>
      </main>

      <div className="absolute top-[385px] left-[1109px] flex size-[48px] items-center justify-center rounded-full bg-[#5b7dab] text-white shadow-[0_1px_5px_rgba(0,0,0,0.35)]">
        <Icon name="dots" className="size-[18px] [stroke-width:1.800]" />
      </div>
      <ContextMenu />
      <SubMenu />
      <div className={MARK + "top-[380px] left-[1106px] h-[58px] w-[56px]"} />
      <div className={MARK + "top-[597px] left-[1160px] h-[45px] w-[221px]"} />
      <div className={MARK + "top-[859px] left-[1382px] h-[42px] w-[183px]"} />
      <div className="absolute top-[852px] left-[1579px] flex size-[56px] items-center justify-center rounded-full bg-[#fb4343] text-[41px] text-white shadow-[1px_3px_6px_rgba(0,0,0,0.5)]">4</div>
    </div>
  );
}
